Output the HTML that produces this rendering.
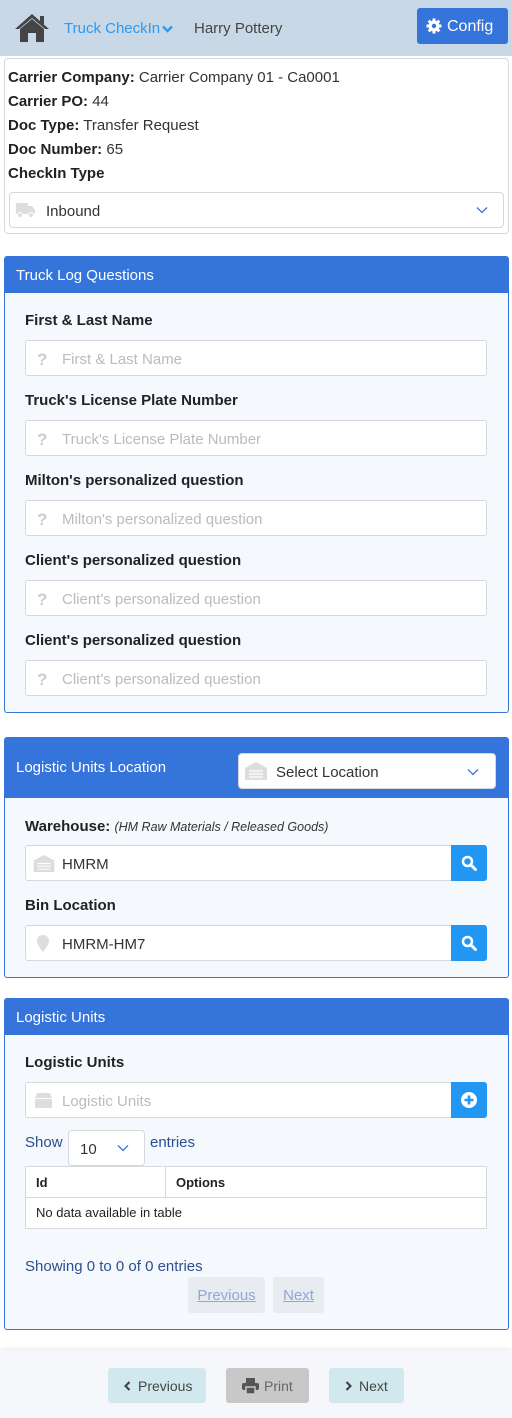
<!DOCTYPE html>
<html><head><meta charset="utf-8"><style>
*{box-sizing:border-box;margin:0;padding:0}
body{width:512px;height:1418px;position:relative;background:#fff;font-family:"Liberation Sans",sans-serif;font-size:15px;color:#333;overflow:hidden}
.a{position:absolute}
.hdr{left:0;top:0;width:512px;height:56px;background:#c9d8e6}
.card{border:1px solid #d5d9de;border-radius:4px;background:#fff}
.panel{border:1px solid #3574db;border-radius:3px;background:#f5f8fd;overflow:hidden}
.ph{position:absolute;left:0;top:0;right:0;background:#3574db;color:#fff;font-size:15px;padding-left:11px}
.lbl{font-weight:bold;font-size:15px;color:#222}
.inp{border:1px solid #d5d9de;border-radius:3px;background:#fff;height:36px;color:#bbb;font-size:15px;line-height:37px;padding-left:36px}
.inp .ic{position:absolute;left:11px;top:0;color:#ccc;font-weight:bold;font-size:17px}
.btn{position:absolute;background:#2196f3;width:36px;height:36px;border-radius:0 3px 3px 0}
</style></head><body>
<div class="a hdr"></div>
<svg class="a" style="left:14px;top:13px" width="36" height="30" viewBox="0 0 36 30"><path d="M18 1 L1 16 L5 16 L18 5 L31 16 L35 16 Z" fill="#444"/><path d="M6 16 L18 6 L30 16 L30 29 L22 29 L22 20 L14 20 L14 29 L6 29 Z" fill="#444"/><rect x="26" y="3" width="4" height="8" fill="#444"/></svg>
<div class="a" style="left:64px;top:20px;color:#2b9af0;font-size:15px">Truck CheckIn<svg width="11" height="8" viewBox="0 0 11 8" style="margin-left:2px"><path d="M1 1.5 L5.5 6 L10 1.5" stroke="#2b9af0" stroke-width="2.4" fill="none"/></svg></div>
<div class="a" style="left:194px;top:20px;color:#444;font-size:15px">Harry Pottery</div>
<div class="a" style="left:417px;top:8px;width:91px;height:36px;background:#3574db;border-radius:3px;color:#fff;font-size:16px;line-height:37px;padding-left:30px">Config</div>
<svg class="a" style="left:426px;top:18px" width="16" height="16" viewBox="0 0 16 16"><circle cx="8" cy="8" r="5.5" fill="#fff"/><g stroke="#fff" stroke-width="3"><path d="M8 0.5V15.5M0.5 8H15.5M2.7 2.7L13.3 13.3M13.3 2.7L2.7 13.3"/></g><circle cx="8" cy="8" r="2.2" fill="#3574db"/></svg>

<div class="a card" style="left:4px;top:58px;width:505px;height:176px"></div>
<div class="a" style="left:8px;top:66px;line-height:24px;font-size:15px;color:#333">
<div><b style="color:#222">Carrier Company:</b> Carrier Company 01 - Ca0001</div>
<div><b style="color:#222">Carrier PO:</b> 44</div>
<div><b style="color:#222">Doc Type:</b> Transfer Request</div>
<div><b style="color:#222">Doc Number:</b> 65</div>
<div><b style="color:#222">CheckIn Type</b></div></div>
<div class="a card" style="left:9px;top:192px;width:495px;height:36px;color:#333;line-height:37px;padding-left:36px">Inbound</div>
<svg class="a" style="left:16px;top:203px" width="20" height="15" viewBox="0 0 20 15"><rect x="0" y="0" width="12" height="11" fill="#ddd"/><path d="M12 3H16L19 7V11H12Z" fill="#ddd"/><circle cx="4" cy="12" r="2.5" fill="#ddd" stroke="#fff"/><circle cx="15" cy="12" r="2.5" fill="#ddd" stroke="#fff"/></svg>
<svg class="a" style="left:476px;top:206px" width="12" height="8" viewBox="0 0 12 8"><path d="M1 1.5L6 6.5L11 1.5" stroke="#3574db" stroke-width="1.3" fill="none"/></svg>

<div class="a panel" style="left:4px;top:256px;width:505px;height:457px"><div class="ph" style="height:36px;line-height:37px">Truck Log Questions</div></div>
<div class="a lbl" style="left:25px;top:312px">First &amp; Last Name</div>
<div class="a inp" style="left:25px;top:340px;width:462px"><span class="ic">?</span>First &amp; Last Name</div>
<div class="a lbl" style="left:25px;top:392px">Truck's License Plate Number</div>
<div class="a inp" style="left:25px;top:420px;width:462px"><span class="ic">?</span>Truck's License Plate Number</div>
<div class="a lbl" style="left:25px;top:472px">Milton's personalized question</div>
<div class="a inp" style="left:25px;top:500px;width:462px"><span class="ic">?</span>Milton's personalized question</div>
<div class="a lbl" style="left:25px;top:552px">Client's personalized question</div>
<div class="a inp" style="left:25px;top:580px;width:462px"><span class="ic">?</span>Client's personalized question</div>
<div class="a lbl" style="left:25px;top:632px">Client's personalized question</div>
<div class="a inp" style="left:25px;top:660px;width:462px"><span class="ic">?</span>Client's personalized question</div>

<div class="a panel" style="left:4px;top:737px;width:505px;height:241px"><div class="ph" style="height:60px;line-height:60px">Logistic Units Location</div></div>
<div class="a card" style="left:238px;top:753px;width:258px;height:36px;color:#333;line-height:37px;padding-left:37px">Select Location</div>
<svg class="a" style="left:245px;top:762px" width="22" height="18" viewBox="0 0 22 18"><path d="M0 6L11 0L22 6V18H0Z" fill="#ddd"/><g stroke="#fff" stroke-width="1.2"><path d="M4 9H18M4 12H18M4 15H18"/></g></svg>
<svg class="a" style="left:467px;top:768px" width="12" height="8" viewBox="0 0 12 8"><path d="M1 1.5L6 6.5L11 1.5" stroke="#3574db" stroke-width="1.3" fill="none"/></svg>
<div class="a" style="left:25px;top:818px"><b style="color:#222">Warehouse:</b> <i style="font-size:12.5px;color:#333">(HM Raw Materials / Released Goods)</i></div>
<div class="a inp" style="left:25px;top:845px;width:462px;color:#333"><svg class="a" style="left:7px;top:9px" width="22" height="17" viewBox="0 0 22 18"><path d="M0 6L11 0L22 6V18H0Z" fill="#ddd"/><g stroke="#fff" stroke-width="1.2"><path d="M4 9H18M4 12H18M4 15H18"/></g></svg>HMRM</div>
<div class="btn" style="left:451px;top:845px"><svg style="position:absolute;left:10px;top:10px" width="16" height="16" viewBox="0 0 16 16"><circle cx="6.5" cy="6.5" r="4.5" stroke="#fff" stroke-width="2.5" fill="none"/><path d="M10 10L14.5 14.5" stroke="#fff" stroke-width="3" stroke-linecap="round"/></svg></div>
<div class="a lbl" style="left:25px;top:897px">Bin Location</div>
<div class="a inp" style="left:25px;top:925px;width:462px;color:#333"><svg class="a" style="left:11px;top:9px" width="12" height="17" viewBox="0 0 12 17"><path d="M6 0C2.5 0 0 2.5 0 6C0 10 6 17 6 17C6 17 12 10 12 6C12 2.5 9.5 0 6 0Z" fill="#ddd"/></svg>HMRM-HM7</div>
<div class="btn" style="left:451px;top:925px"><svg style="position:absolute;left:10px;top:10px" width="16" height="16" viewBox="0 0 16 16"><circle cx="6.5" cy="6.5" r="4.5" stroke="#fff" stroke-width="2.5" fill="none"/><path d="M10 10L14.5 14.5" stroke="#fff" stroke-width="3" stroke-linecap="round"/></svg></div>

<div class="a panel" style="left:4px;top:998px;width:505px;height:332px"><div class="ph" style="height:36px;line-height:37px">Logistic Units</div></div>
<div class="a lbl" style="left:25px;top:1054px">Logistic Units</div>
<div class="a inp" style="left:25px;top:1082px;width:462px"><svg class="a" style="left:9px;top:10px" width="17" height="15" viewBox="0 0 17 15"><path d="M2 0H15L17 5H0Z" fill="#ddd"/><rect x="0" y="6" width="17" height="9" fill="#ddd"/></svg>Logistic Units</div>
<div class="btn" style="left:451px;top:1082px"><svg style="position:absolute;left:9px;top:9px" width="18" height="18" viewBox="0 0 18 18"><circle cx="9" cy="9" r="8" fill="#fff"/><path d="M9 4.5V13.5M4.5 9H13.5" stroke="#2196f3" stroke-width="2.6"/></svg></div>
<div class="a" style="left:25px;top:1134px;color:#2b4f8f">Show</div>
<div class="a card" style="left:68px;top:1130px;width:77px;height:36px;line-height:37px;padding-left:11px;color:#333">10</div>
<svg class="a" style="left:117px;top:1144px" width="12" height="8" viewBox="0 0 12 8"><path d="M1 1.5L6 6.5L11 1.5" stroke="#3574db" stroke-width="1.3" fill="none"/></svg>
<div class="a" style="left:150px;top:1134px;color:#2b4f8f">entries</div>
<div class="a" style="left:25px;top:1166px;width:462px;height:63px;border:1px solid #d5d9de;background:#fff;font-size:13px">
<div style="height:31px;border-bottom:1px solid #d5d9de;position:relative;font-weight:bold;color:#222;line-height:31px"><span style="position:absolute;left:10px">Id</span><span style="position:absolute;left:139px;top:0;bottom:0;border-left:1px solid #d5d9de;padding-left:10px">Options</span></div>
<div style="line-height:30px;padding-left:10px;color:#222">No data available in table</div></div>
<div class="a" style="left:25px;top:1258px;color:#2b4f8f">Showing 0 to 0 of 0 entries</div>
<div class="a" style="left:188px;top:1277px;width:77px;height:36px;background:#e8ebef;border-radius:3px;color:#8fa8d6;text-decoration:underline;line-height:37px;text-align:center">Previous</div>
<div class="a" style="left:273px;top:1277px;width:51px;height:36px;background:#e8ebef;border-radius:3px;color:#8fa8d6;text-decoration:underline;line-height:37px;text-align:center">Next</div>

<div class="a" style="left:0;top:1351px;width:512px;height:67px;background:#f5f7fa;box-shadow:0 -3px 4px rgba(0,0,0,0.06)"></div>
<div class="a" style="left:108px;top:1368px;width:98px;height:35px;background:#d1e9ee;border-radius:3px;line-height:36px;font-size:14px;color:#444;padding-left:30px">Previous</div>
<svg class="a" style="left:124px;top:1381px" width="7" height="10" viewBox="0 0 7 10"><path d="M5.5 1L1.5 5L5.5 9" stroke="#444" stroke-width="2.2" fill="none"/></svg>
<div class="a" style="left:226px;top:1368px;width:83px;height:35px;background:#c8c8c8;border-radius:3px;line-height:36px;font-size:14px;color:#666;padding-left:38px">Print</div>
<svg class="a" style="left:242px;top:1378px" width="17" height="16" viewBox="0 0 17 16"><rect x="4" y="0" width="9" height="5" fill="#555"/><rect x="0" y="5" width="17" height="7" rx="2" fill="#555"/><rect x="4" y="9" width="9" height="7" fill="#555" stroke="#c8c8c8" stroke-width="1.5"/></svg>
<div class="a" style="left:329px;top:1368px;width:75px;height:35px;background:#d1e9ee;border-radius:3px;line-height:36px;font-size:14px;color:#444;padding-left:30px">Next</div>
<svg class="a" style="left:345px;top:1381px" width="7" height="10" viewBox="0 0 7 10"><path d="M1.5 1L5.5 5L1.5 9" stroke="#444" stroke-width="2.2" fill="none"/></svg>
</body></html>
